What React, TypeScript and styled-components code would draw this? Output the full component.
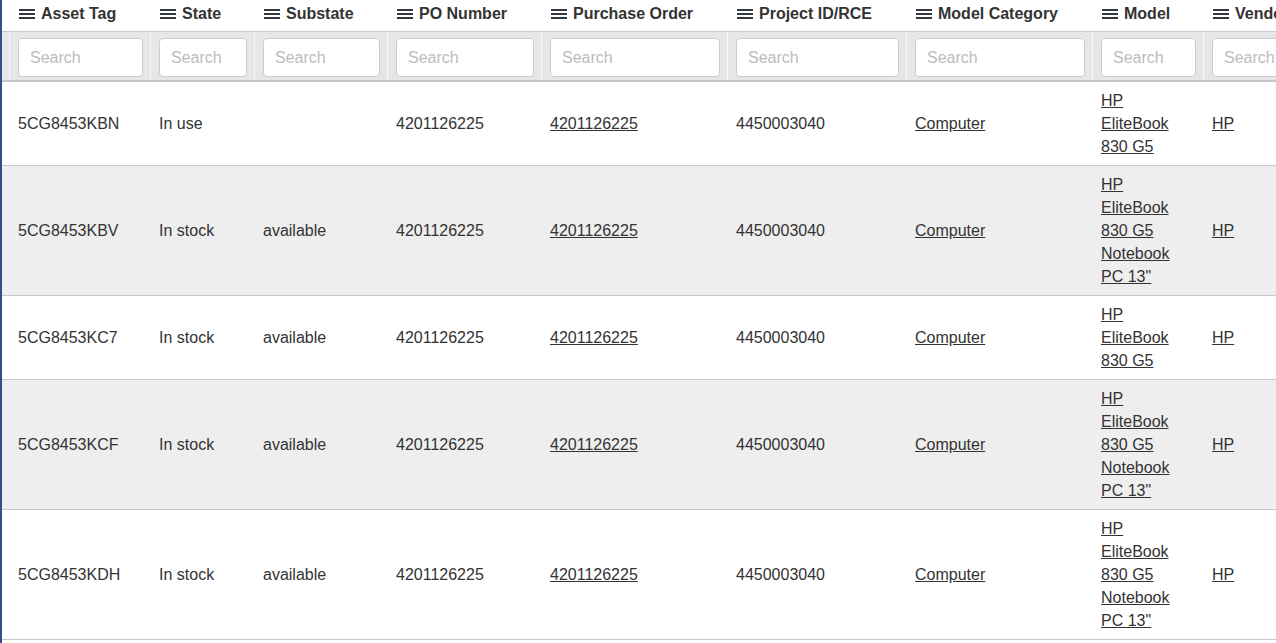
import type { JSX } from 'react';
import styled, { createGlobalStyle } from 'styled-components';

type Asset = {
  tag: string;
  state: string;
  substate: string;
  po: string;
  order: string;
  project: string;
  category: string;
  model: string;
  vendor: string;
};

const COLUMNS = [
  'Asset Tag',
  'State',
  'Substate',
  'PO Number',
  'Purchase Order',
  'Project ID/RCE',
  'Model Category',
  'Model',
  'Vendor',
];

const SHORT_MODEL = 'HP EliteBook 830 G5';
const LONG_MODEL = 'HP EliteBook 830 G5 Notebook PC 13"';

const ASSETS: Asset[] = [
  { tag: '5CG8453KBN', state: 'In use', substate: '', po: '4201126225', order: '4201126225', project: '4450003040', category: 'Computer', model: SHORT_MODEL, vendor: 'HP' },
  { tag: '5CG8453KBV', state: 'In stock', substate: 'available', po: '4201126225', order: '4201126225', project: '4450003040', category: 'Computer', model: LONG_MODEL, vendor: 'HP' },
  { tag: '5CG8453KC7', state: 'In stock', substate: 'available', po: '4201126225', order: '4201126225', project: '4450003040', category: 'Computer', model: SHORT_MODEL, vendor: 'HP' },
  { tag: '5CG8453KCF', state: 'In stock', substate: 'available', po: '4201126225', order: '4201126225', project: '4450003040', category: 'Computer', model: LONG_MODEL, vendor: 'HP' },
  { tag: '5CG8453KDH', state: 'In stock', substate: 'available', po: '4201126225', order: '4201126225', project: '4450003040', category: 'Computer', model: LONG_MODEL, vendor: 'HP' },
];

const BarsIcon = (): JSX.Element => (
  <IconSvg width='16' height='10' viewBox='0 0 16 10'>
    <rect x='0' y='0' width='16' height='2' />
    <rect x='0' y='4' width='16' height='2' />
    <rect x='0' y='8' width='16' height='2' />
  </IconSvg>
);

export default function App(): JSX.Element {
  return (
    <>
      <GlobalStyle />
      <Frame>
        <HeaderRow>
          <Spacer />
          {COLUMNS.map(title => (
            <HeaderCell key={title}>
              <BarsIcon />
              {title}
            </HeaderCell>
          ))}
        </HeaderRow>
        <FilterRow>
          <FilterCell />
          {COLUMNS.map(title => (
            <FilterCell key={title}>
              <SearchInput placeholder='Search' />
            </FilterCell>
          ))}
        </FilterRow>
        {ASSETS.map((a, i) => (
          <BodyRow key={a.tag} striped={i % 2 === 1}>
            <Spacer />
            <Cell>{a.tag}</Cell>
            <Cell>{a.state}</Cell>
            <Cell>{a.substate}</Cell>
            <Cell>{a.po}</Cell>
            <Cell>
              <Link href='#'>{a.order}</Link>
            </Cell>
            <Cell>{a.project}</Cell>
            <Cell>
              <Link href='#'>{a.category}</Link>
            </Cell>
            <Cell narrow>
              <Link href='#'>{a.model}</Link>
            </Cell>
            <Cell>
              <Link href='#'>{a.vendor}</Link>
            </Cell>
          </BodyRow>
        ))}
      </Frame>
    </>
  );
}

const GlobalStyle = createGlobalStyle`
  html, body {
    margin: 0;
    padding: 0;
    background: #ffffff;
    overflow: hidden;
  }
  body {
    font-family: 'Liberation Sans', Arial, sans-serif;
    color: #333333;
  }
`;

const GRID = '7px 141px 104px 133px 154px 186px 179px 186px 111px 140px';

const Frame = styled.div`
  width: 1276px;
  height: 643px;
  overflow: hidden;
  border-left: 2px solid #2f5185;
  box-sizing: border-box;
`;

const Row = styled.div`
  display: grid;
  grid-template-columns: ${GRID};
  width: max-content;
`;

const HeaderRow = styled(Row)`
  height: 31px;
  background: #ffffff;
`;

const Spacer = styled.div``;

const HeaderCell = styled.div`
  display: flex;
  align-items: center;
  padding: 0 8px 4px 10px;
  font-size: 16px;
  font-weight: 700;
  color: #333333;
  white-space: nowrap;
`;

const IconSvg = styled.svg`
  fill: #333840;
  margin-right: 6px;
  flex-shrink: 0;
`;

const FilterRow = styled(Row)`
  background: #e5e6e7;
  border-top: 1px solid #c9cacb;
  border-bottom: 2px solid #c6c7c8;
`;

const FilterCell = styled.div`
  box-sizing: border-box;
  padding: 6px 7px 3px 8px;
  border-left: 1px solid #f6f6f6;
  &:first-child {
    border-left: none;
  }
`;

const SearchInput = styled.input`
  box-sizing: border-box;
  display: block;
  width: 100%;
  height: 39px;
  padding: 0 11px;
  border: 1px solid #cccccc;
  border-radius: 4px;
  background: #ffffff;
  font-family: 'Liberation Sans', Arial, sans-serif;
  font-size: 16px;
  color: #555555;
  outline: none;

  &::placeholder {
    color: #bcbcbc;
  }
`;

const BodyRow = styled(Row)<{ striped: boolean }>`
  background: ${({ striped }) => (striped ? '#eeeeee' : '#ffffff')};
  border-bottom: 1px solid #c8c8c8;
`;

const Cell = styled.div<{ narrow?: boolean }>`
  box-sizing: border-box;
  display: flex;
  align-items: center;
  padding: 7px ${({ narrow }) => (narrow ? '12px' : '8px')} 7px 9px;
  font-size: 16px;
  line-height: 23px;
  color: #333333;
`;

const Link = styled.a`
  color: #333333;
  text-decoration: underline;
`;
